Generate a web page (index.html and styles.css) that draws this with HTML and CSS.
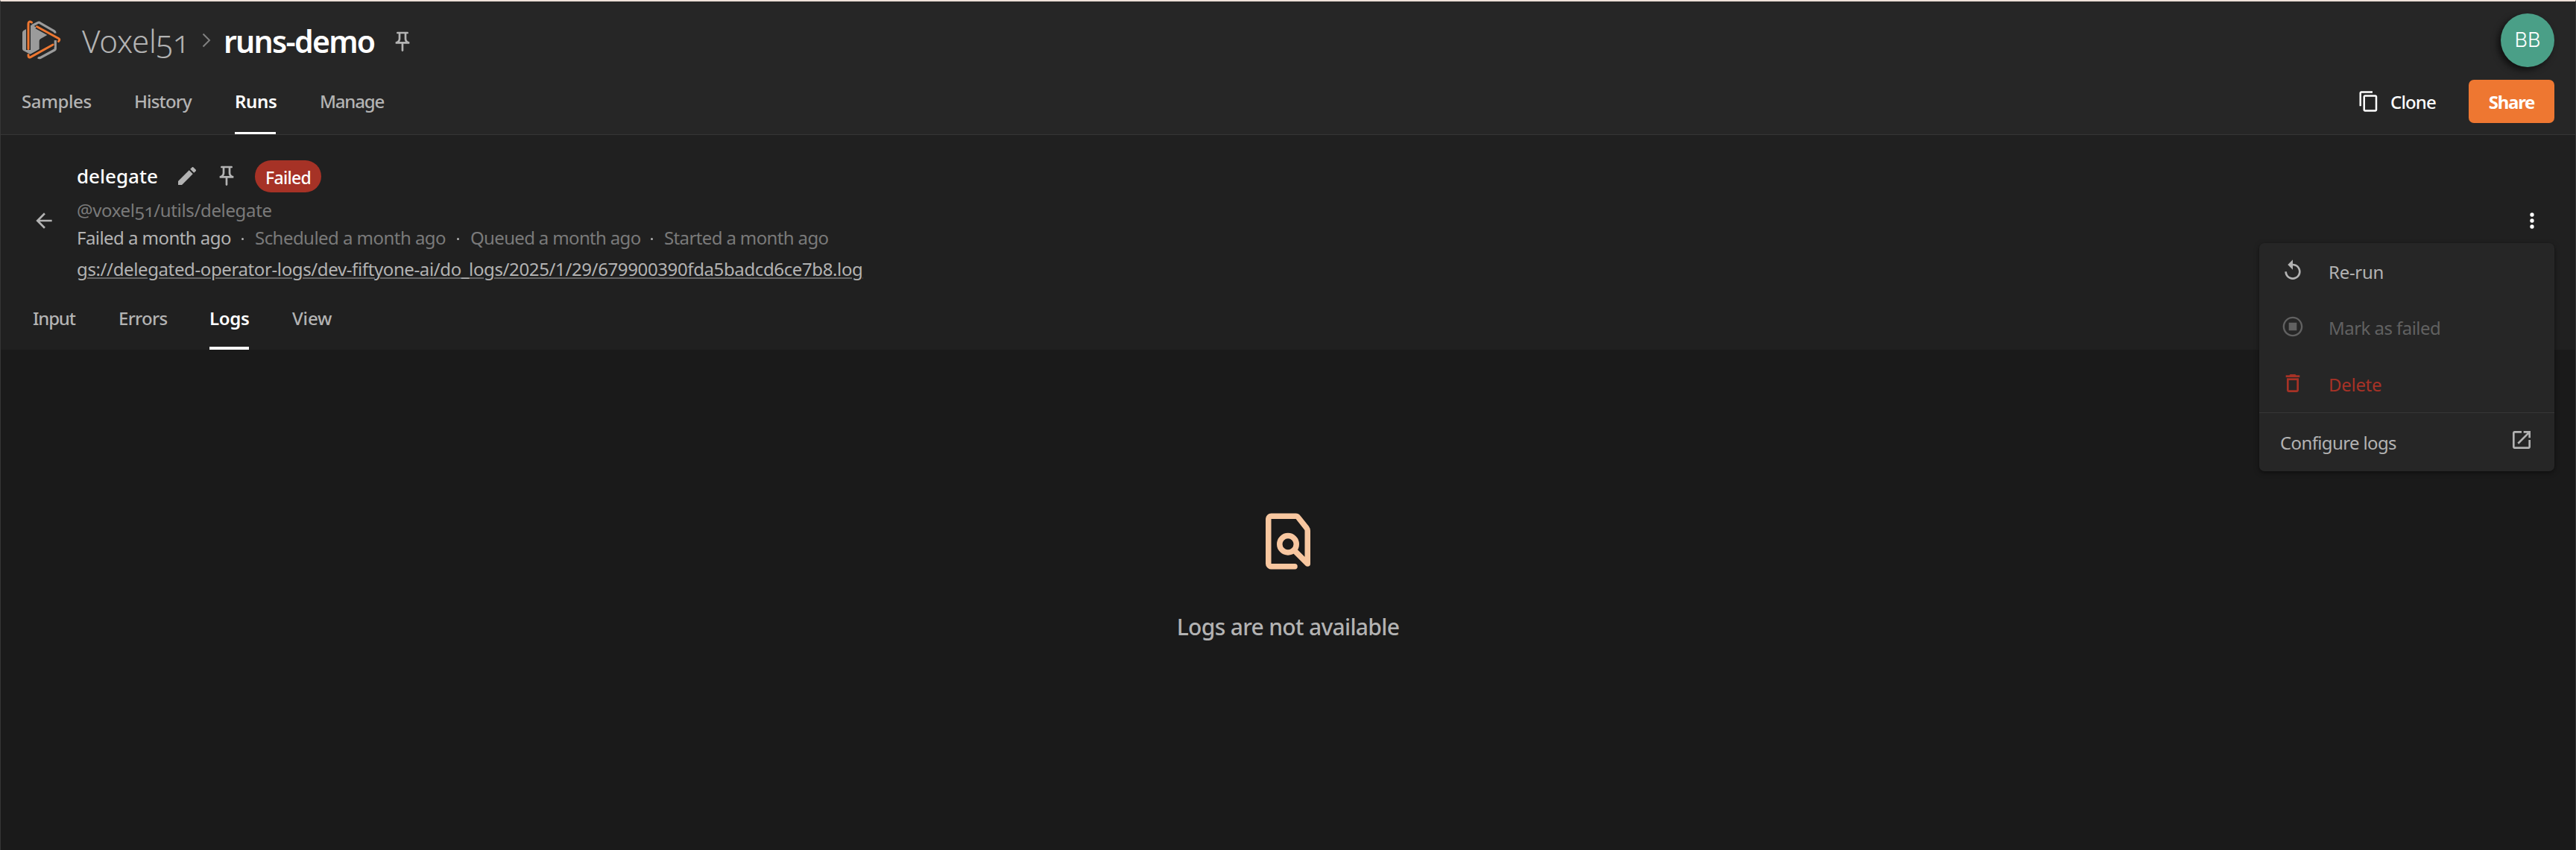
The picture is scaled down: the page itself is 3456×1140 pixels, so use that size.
FILE: index.html
```html
<!DOCTYPE html>
<html lang="en">
<head>
<meta charset="utf-8">
<title>runs-demo</title>
<link rel="stylesheet" href="styles.css">
</head>
<body>
<svg width="0" height="0" class="defs">
  <symbol id="pin" viewBox="0 0 24 24"><path d="M14 4v5c0 1.12.37 2.16 1 3H9c.65-.86 1-1.9 1-3V4h4m3-2H7c-.55 0-1 .45-1 1s.45 1 1 1h1v5c0 1.66-1.34 3-3 3v2h5.97v7l1 1 1-1v-7H19v-2c-1.66 0-3-1.34-3-3V4h1c.55 0 1-.45 1-1s-.45-1-1-1z"/></symbol>
</svg>
<div class="app">
  <header class="topbar">
    <div class="crumbs">
      <svg class="logo" viewBox="0 0 70 70">
        <path class="logo-gray" d="M16 19.500 11.500 22Q10 23 10 25V46.500Q10 48 11.500 49L20 53.500Q21 54 22 53.500L32.700 47V36Q32.700 34 34.500 33L45 27 29 17.500 22 14.500Z"/>
        <path class="logo-line" d="M23 15.500 31 11.300Q32 10.800 33 11.300L52.500 22.500Q54 23.500 54 25.500M54.300 35V46.500Q54.300 47.500 53.300 48L34 58.500Q32.500 59.200 31 57.800"/>
        <path class="logo-gap" d="M18 13V48M29 16.500 58 32.500M52 40.500 20 57.500"/>
        <path class="logo-orange" d="M22.500 11Q18 8.500 18 13V46.500M29.500 16.800 58.500 32.500Q61 34 58.500 36.500M51 41 20.500 57.800Q18 59 18 54.500"/>
      </svg>
      <span class="org">Voxel51</span>
      <svg class="chevron" viewBox="0 0 12 20"><path d="M1.500 1.500 10 10 1.500 18.500"/></svg>
      <span class="dataset">runs-demo</span>
      <svg class="icon crumb-pin"><use href="#pin"/></svg>
      <span class="avatar">BB</span>
    </div>
    <div class="navrow">
      <nav class="tabs main-tabs">
        <a class="tab samples">Samples</a>
        <a class="tab history">History</a>
        <a class="tab active runs">Runs</a>
        <a class="tab manage">Manage</a>
      </nav>
      <div class="actions">
        <svg class="clone-icon" viewBox="0 0 24 24"><path d="M16 1H4c-1.100 0-2 .9-2 2v14h2V3h12V1zm3 4H8c-1.100 0-2 .9-2 2v14c0 1.100.9 2 2 2h11c1.100 0 2-.9 2-2V7c0-1.100-.9-2-2-2zm0 16H8V7h11v14z"/></svg>
        <span class="clone">Clone</span>
        <button class="share">Share</button>
      </div>
    </div>
  </header>

  <section class="run">
    <div class="run-head">
      <svg class="icon back" viewBox="0 0 24 24"><path d="M20 11H7.830l5.590-5.590L12 4l-8 8 8 8 1.410-1.410L7.830 13H20v-2z"/></svg>
      <div class="info">
        <div class="title">
          <span class="name">delegate</span>
          <svg class="icon edit" viewBox="0 0 24 24"><path d="M3 17.250V21h3.750L17.810 9.940l-3.750-3.750L3 17.250zM20.710 7.040c.39-.39.39-1.020 0-1.410l-2.340-2.340c-.39-.39-1.020-.39-1.410 0l-1.830 1.830 3.750 3.750 1.830-1.830z"/></svg>
          <svg class="icon title-pin"><use href="#pin"/></svg>
          <span class="chip">Failed</span>
        </div>
        <div class="uri">@voxel51/utils/delegate</div>
        <div class="times">
          <span class="t-failed">Failed a month ago</span>
          <i class="dot"></i>
          <span class="t-scheduled">Scheduled a month ago</span>
          <i class="dot"></i>
          <span class="t-queued">Queued a month ago</span>
          <i class="dot"></i>
          <span class="t-started">Started a month ago</span>
        </div>
        <div class="log"><a>gs://delegated-operator-logs/dev-fiftyone-ai/do_logs/2025/1/29/679900390fda5badcd6ce7b8.log</a></div>
      </div>
      <svg class="icon more" viewBox="0 0 24 24"><circle cx="12" cy="6" r="2"/><circle cx="12" cy="12" r="2"/><circle cx="12" cy="18" r="2"/></svg>
    </div>
    <nav class="tabs run-tabs">
      <a class="tab input">Input</a>
      <a class="tab errors">Errors</a>
      <a class="tab active logs">Logs</a>
      <a class="tab view">View</a>
    </nav>
  </section>

  <main class="empty">
    <svg class="empty-icon" viewBox="0 0 24 24"><path d="M14.400 21H6a1 1 0 0 1-1-1V4a1 1 0 0 1 1-1H14.800Q15.300 3 15.600 3.400L18.700 7.300Q19 7.700 19 8.200V20L14.400 15.400"/><circle cx="12" cy="13" r="3"/></svg>
    <p>Logs are not available</p>
  </main>

  <div class="menu">
    <div class="item"><svg class="icon" viewBox="0 0 24 24"><path d="M12 5V1L7 6l5 5V7c3.310 0 6 2.690 6 6s-2.690 6-6 6-6-2.690-6-6H4c0 4.420 3.580 8 8 8s8-3.580 8-8-3.580-8-8-8z"/></svg><span class="rerun">Re-run</span></div>
    <div class="item disabled"><svg class="icon" viewBox="0 0 24 24"><path d="M12 2C6.480 2 2 6.480 2 12s4.480 10 10 10 10-4.480 10-10S17.520 2 12 2zm0 18.200c-4.530 0-8.200-3.670-8.200-8.200s3.670-8.200 8.200-8.200 8.200 3.670 8.200 8.200-3.670 8.200-8.200 8.200zM8 8h8v8H8z"/></svg><span class="mark">Mark as failed</span></div>
    <div class="item danger"><svg class="icon" viewBox="0 0 24 24"><path d="M6 19c0 1.100.9 2 2 2h8c1.100 0 2-.9 2-2V7H6v12zM8 9h8v10H8V9zm7.500-5l-1-1h-5l-1 1H5v2h14V4h-3.500z"/></svg><span class="delete">Delete</span></div>
    <div class="item configure"><span>Configure logs</span><svg class="icon" viewBox="0 0 24 24"><path d="M19 19H5V5h7V3H5c-1.110 0-2 .9-2 2v14c0 1.100.89 2 2 2h14c1.100 0 2-.9 2-2v-7h-2v7zM14 3v2h3.590l-9.830 9.830 1.410 1.410L19 6.410V10h2V3h-7z"/></svg></div>
  </div>
</div>
</body>
</html>
```

FILE: styles.css
```css
* { box-sizing: border-box; }
body {
  margin: 0;
  background: #1a1a1a;
  color: #b3b3b3;
  font-family: "Noto Sans", sans-serif;
  font-size: 24px;
  white-space: nowrap;
}
.defs { position: absolute; }
.app {
  position: relative;
  display: flex;
  flex-direction: column;
  height: 1140px;
  border: solid #363636;
  border-width: 0 1px;
  border-top: 2px solid #eee0d9;
}
svg { flex: none; fill: currentColor; }
.icon { width: 32px; height: 32px; }

.topbar { height: 179px; flex: none; background: #262626; border-bottom: 1px solid #363636; }
.crumbs { display: flex; align-items: center; height: 104px; padding-right: 28px; }
.logo { width: 70px; height: 70px; margin-left: 19px; }
.logo-gray { fill: #9b9b9b; }
.logo-line { fill: none; stroke: #9b9b9b; stroke-width: 3.2; }
.logo-gap { fill: none; stroke: #262626; stroke-width: 6; }
.logo-orange { fill: none; stroke: #ee7731; stroke-width: 3; stroke-linecap: round; }
.org { width: 161px; margin-left: 20px; padding-top: 1px; font-size: 42px; font-weight: 300; font-variant-numeric: oldstyle-nums; letter-spacing: -.25px; }
.chevron { width: 12px; height: 20px; fill: none; stroke: #808080; stroke-width: 2; }
.dataset { width: 224px; margin-left: 17px; padding-top: 2px; font-size: 41px; font-weight: 600; letter-spacing: -1.7px; color: #fff; }
.crumb-pin { margin-top: 4px; }
.avatar {
  width: 72px;
  height: 72px;
  margin-left: auto;
  border-radius: 50%;
  background: #4a9f87;
  box-shadow: -4px 4px 8px rgba(0, 0, 0, .6);
  color: #fff;
  font: 300 27px/72px "Inter", sans-serif;
  text-align: center;
}

.navrow { display: flex; justify-content: space-between; height: 74px; }
.tabs { display: grid; font-weight: 500; }
.tab { justify-self: start; border-bottom: 0 solid #fff; }
.active { color: #fff; font-weight: 600; }
.main-tabs { grid-template-columns: 151px 135px 114px auto; margin-left: 28px; line-height: 60px; }
.main-tabs .tab { height: 74px; }
.main-tabs .active { width: 55px; border-bottom-width: 3px; }
.samples { letter-spacing: -.38px; }
.history { letter-spacing: -.85px; }
.runs { letter-spacing: -.35px; }
.manage { letter-spacing: -1.2px; }
.actions { display: flex; align-items: center; height: 60px; padding-right: 28px; color: #fff; font-weight: 500; }
.clone-icon { width: 30px; height: 30px; margin-right: 14px; }
.clone { width: 105px; letter-spacing: -.86px; }
.share {
  width: 115px;
  height: 58px;
  padding: 0;
  border: 0;
  border-radius: 7px;
  background: #ee7731;
  color: #fff;
  font: 700 24px "Noto Sans", sans-serif;
  letter-spacing: -1.3px;
}

.run { height: 288px; flex: none; background: #202020; }
.run-head { display: flex; align-items: center; height: 203px; padding: 27px 42px 0; }
.info { flex: 1; height: 164px; margin-left: 28px; }
.title { display: flex; align-items: center; height: 44px; margin-bottom: 6px; }
.name { width: 132px; font-size: 26px; font-weight: 500; color: #fff; line-height: 46px; }
.title-pin { margin: 0 22px 0 21px; }
.chip {
  width: 89px;
  height: 43px;
  border-radius: 22px;
  background: #a63226;
  color: #fff;
  font-size: 23px;
  font-weight: 500;
  letter-spacing: -.68px;
  line-height: 46px;
  text-align: center;
}
.uri { line-height: 36px; font-variant-numeric: oldstyle-nums; letter-spacing: -.35px; color: #7a7a7a; }
.times { display: flex; align-items: center; line-height: 37px; color: #7a7a7a; }
.t-failed { width: 222px; letter-spacing: -.55px; color: #b3b3b3; }
.t-scheduled { width: 272px; letter-spacing: -.54px; }
.t-queued { width: 243px; letter-spacing: -.66px; }
.t-started { letter-spacing: -.63px; }
.dot { width: 3px; height: 3px; margin: 3px 15px 0 -1px; border-radius: 50%; background: #b3b3b3; }
.log { line-height: 47px; letter-spacing: -.381px; }
.log a { text-decoration: underline #636363 2px; text-underline-offset: 2px; }
.more { color: #fff; }
.run-tabs { grid-template-columns: 115px 122px 111px auto; margin-left: 43px; line-height: 85px; }
.run-tabs .tab { height: 85px; }
.run-tabs .active { width: 53px; border-bottom-width: 4px; }
.input { letter-spacing: -1.2px; }
.errors { letter-spacing: -.7px; }
.logs { letter-spacing: -.31px; }
.view { letter-spacing: -.18px; }

.empty { display: flex; flex-direction: column; align-items: center; padding-top: 212px; }
.empty-icon { width: 90px; height: 90px; fill: none; stroke: #f8c7a0; stroke-width: 2; stroke-linecap: round; stroke-linejoin: round; }
.empty p { margin: 50px 0 0; font-size: 30px; font-weight: 500; line-height: 40px; letter-spacing: -.68px; }

.menu {
  position: absolute;
  top: 324px;
  right: 28px;
  width: 396px;
  height: 306px;
  border-radius: 7px;
  background: #262626;
  box-shadow: 0 2px 6px rgba(0, 0, 0, .5);
}
.item { display: flex; align-items: center; height: 75px; padding: 2px 29px 0; }
.item .icon { margin: -4px 32px 0 0; }
.rerun { letter-spacing: -.29px; }
.mark { letter-spacing: -.54px; }
.delete { letter-spacing: -.29px; }
.disabled { color: #616161; }
.danger { color: #a63226; height: 77px; }
.configure { justify-content: space-between; height: 79px; border-top: 1px solid #363636; padding: 0 28px 0; letter-spacing: -.63px; }
.configure .icon { margin: -7px 0 0; }
```
